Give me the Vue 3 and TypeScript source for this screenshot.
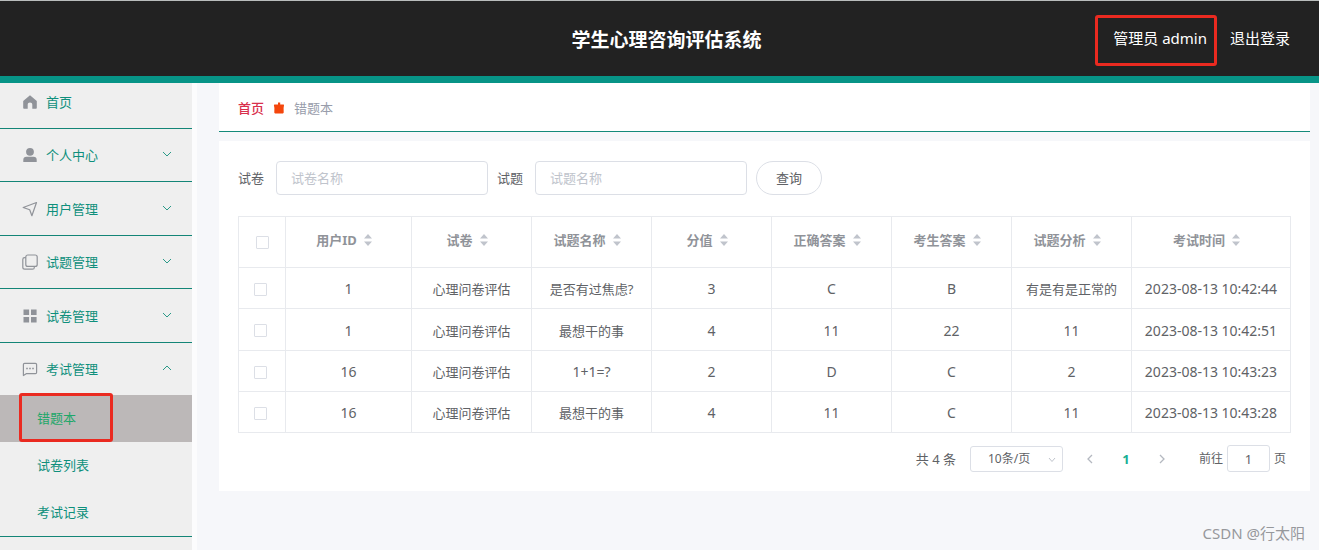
<script setup lang="ts">
import { ref } from 'vue'

interface MenuItem {
  label: string
  icon: string
  children?: string[]
}

interface Column {
  key: string
  label: string
  width: string
}

const menu: MenuItem[] = [
  { label: '首页', icon: 'home' },
  { label: '个人中心', icon: 'user', children: [] },
  { label: '用户管理', icon: 'send', children: [] },
  { label: '试题管理', icon: 'copy', children: [] },
  { label: '试卷管理', icon: 'grid', children: [] },
  { label: '考试管理', icon: 'chat', children: ['错题本', '试卷列表', '考试记录'] },
]
const opened = ref('考试管理')
const current = ref('错题本')

function toggle(item: MenuItem) {
  opened.value = opened.value === item.label ? '' : item.label
}

const columns: Column[] = [
  { key: 'user', label: '用户ID', width: 'w-user' },
  { key: 'paper', label: '试卷', width: 'w-std' },
  { key: 'question', label: '试题名称', width: 'w-std' },
  { key: 'score', label: '分值', width: 'w-std' },
  { key: 'answer', label: '正确答案', width: 'w-std' },
  { key: 'reply', label: '考生答案', width: 'w-std' },
  { key: 'analysis', label: '试题分析', width: 'w-std' },
  { key: 'time', label: '考试时间', width: 'w-rest' },
]

const rows: Record<string, string>[] = [
  { user: '1', paper: '心理问卷评估', question: '是否有过焦虑?', score: '3', answer: 'C', reply: 'B', analysis: '有是有是正常的', time: '2023-08-13 10:42:44' },
  { user: '1', paper: '心理问卷评估', question: '最想干的事', score: '4', answer: '11', reply: '22', analysis: '11', time: '2023-08-13 10:42:51' },
  { user: '16', paper: '心理问卷评估', question: '1+1=?', score: '2', answer: 'D', reply: 'C', analysis: '2', time: '2023-08-13 10:43:23' },
  { user: '16', paper: '心理问卷评估', question: '最想干的事', score: '4', answer: '11', reply: 'C', analysis: '11', time: '2023-08-13 10:43:28' },
]

const isLatin = (s: string) => /^[\x20-\x7e]+$/.test(s)

const paper = ref('')
const question = ref('')
const pageSize = ref('10')
const page = ref('1')
</script>

<template>
  <div class="app">
    <header class="header">
      <h1 class="title">学生心理咨询评估系统</h1>
      <div class="account">
        <span class="user">管理员 admin<i class="mark mark-user"></i></span>
        <a href="#" class="logout">退出登录</a>
      </div>
    </header>

    <div class="body">
      <nav class="sidebar">
        <div v-for="item in menu" :key="item.label" class="group" :class="{ first: !item.children }">
          <button type="button" class="item" @click="toggle(item)">
            <svg class="icon" viewBox="0 0 16 16" width="16" height="16" aria-hidden="true">
              <path v-if="item.icon === 'home'" fill="#909399" d="M8 1.300 14.800 7v7c0 .5-.3.8-.8.8h-3.700v-4c0-1.400-.9-2.200-2.300-2.200s-2.300.8-2.300 2.200v4H2c-.5 0-.8-.3-.8-.8V7z" />
              <g v-else-if="item.icon === 'user'" fill="#909399">
                <circle cx="8" cy="4.800" r="3.900" />
                <path d="M1.300 15v-2.300c0-1.900 1.200-3 3.100-3h7.200c1.900 0 3.100 1.100 3.100 3V15z" />
              </g>
              <path v-else-if="item.icon === 'send'" fill="none" stroke="#909399" stroke-width="1.200" stroke-linejoin="round" d="M14.500 1.500 1.200 6.500l6.500 2.300 2.200 5.900z" />
              <g v-else-if="item.icon === 'copy'" fill="none" stroke="#909399" stroke-width="1.200">
                <rect x="3.800" y="1" width="11.400" height="11.400" rx="2" />
                <path d="M3.800 3.700H2.600C1.500 3.700.8 4.400.8 5.500v7.800c0 1.100.8 1.900 1.900 1.900h7.800c1.100 0 1.800-.7 1.800-1.800v-1" />
              </g>
              <path v-else-if="item.icon === 'grid'" fill="#909399" d="M1.500 1.500h5.600v5.600H1.500zM9 1.500h5.600v5.600H9zM1.500 9h5.600v5.600H1.500zM9 9h5.600v5.600H9z" />
              <g v-else>
                <path fill="none" stroke="#909399" stroke-width="1.200" stroke-linejoin="round" d="M2.600 2.300h10.800c.7 0 1.200.5 1.200 1.200v8c0 .7-.5 1.200-1.200 1.200H4.200L1.400 14.500v-11c0-.7.5-1.200 1.200-1.200z" />
                <path fill="#909399" d="M4.200 6.800h1.600v1.400H4.200zM7.200 6.800h1.600v1.400H7.200zM10.200 6.800h1.600v1.400h-1.600z" />
              </g>
            </svg>
            <span class="label">{{ item.label }}</span>
            <svg v-if="item.children" class="arrow" viewBox="0 0 10 6" width="10" height="6" aria-hidden="true">
              <path fill="none" stroke="#2b9a88" :d="opened === item.label ? 'M1 5l4-4 4 4' : 'M1 1l4 4 4-4'" />
            </svg>
          </button>
          <ul v-if="item.children && item.children.length && opened === item.label" class="sub">
            <li v-for="child in item.children" :key="child">
              <a href="#" class="sub-link" :class="{ active: child === current }" @click.prevent="current = child">
                {{ child }}
                <i v-if="child === current" class="mark mark-sub"></i>
              </a>
            </li>
          </ul>
        </div>
      </nav>

      <main class="main">
        <nav class="crumbs">
          <a href="#" class="crumb-home">首页</a>
          <svg class="crumb-sep" viewBox="0 0 12 12" width="12" height="12" aria-hidden="true">
            <path fill="#f4460c" d="M5 .5h2.200v1.900h3.100c.5 0 .8.4.7.9l-.4 2.700.1 4.600c0 .5-.3.8-.8.8H2.100c-.5 0-.8-.3-.8-.8l.1-4.600L.9 3.300c-.1-.5.2-.9.7-.9H5z" />
          </svg>
          <span class="crumb-now">错题本</span>
        </nav>

        <section class="panel">
          <form class="search" @submit.prevent>
            <label for="paper">试卷</label>
            <input id="paper" v-model="paper" class="field" type="text" placeholder="试卷名称" />
            <label for="question">试题</label>
            <input id="question" v-model="question" class="field" type="text" placeholder="试题名称" />
            <button type="submit" class="query">查询</button>
          </form>

          <table class="table">
            <colgroup>
              <col class="w-check" />
              <col v-for="c in columns" :key="c.key" :class="c.width" />
            </colgroup>
            <thead>
              <tr>
                <th><input type="checkbox" class="check" aria-label="全选" /></th>
                <th v-for="c in columns" :key="c.key" class="sortable">
                  <span class="head">
                    {{ c.label }}
                    <svg viewBox="0 0 8 12" width="8" height="12" aria-hidden="true">
                      <path fill="#c0c4cc" d="M4 0l4 4.500H0zM4 12l4-4.500H0z" />
                    </svg>
                  </span>
                </th>
              </tr>
            </thead>
            <tbody>
              <tr v-for="(r, i) in rows" :key="i">
                <td class="pick"><input type="checkbox" class="check" :aria-label="`选择第${i + 1}行`" /></td>
                <td v-for="c in columns" :key="c.key" :class="{ latin: isLatin(r[c.key]) }">{{ r[c.key] }}</td>
              </tr>
            </tbody>
          </table>

          <div class="pager">
            <span class="total">共 4 条</span>
            <span class="size">
              <select v-model="pageSize" aria-label="每页条数">
                <option value="10">10条/页</option>
                <option value="20">20条/页</option>
              </select>
              <svg viewBox="0 0 8 6" width="8" height="6" aria-hidden="true">
                <path fill="none" stroke="#c0c4cc" d="M1 1l3 3.500L7 1" />
              </svg>
            </span>
            <button type="button" class="step" aria-label="上一页">
              <svg viewBox="0 0 6 10" width="6" height="10"><path fill="none" stroke="#b4b8c0" stroke-width="1.300" d="M5 1L1 5l4 4" /></svg>
            </button>
            <button type="button" class="step on">1</button>
            <button type="button" class="step" aria-label="下一页">
              <svg viewBox="0 0 6 10" width="6" height="10"><path fill="none" stroke="#b4b8c0" stroke-width="1.300" d="M1 1l4 4-4 4" /></svg>
            </button>
            <label class="jump">前往<input v-model="page" type="text" />页</label>
          </div>
        </section>
      </main>
    </div>
    <span class="watermark">CSDN @行太阳</span>
  </div>
</template>

<style>
body {
  margin: 0;
  overflow: hidden;
}
</style>

<style scoped>
.app {
  position: relative;
  display: flex;
  flex-direction: column;
  height: 100vh;
  overflow: hidden;
  background: #f6f7fa;
  font-family: "Noto Sans", "Noto Sans CJK SC", sans-serif;
  font-size: 13px;
  line-height: 20px;
  color: #606266;
}
.app * {
  box-sizing: border-box;
}
button,
input,
select {
  font: inherit;
  color: inherit;
}
a {
  text-decoration: none;
}

.header {
  flex: none;
  display: grid;
  grid-template-columns: 1fr auto 1fr;
  align-items: center;
  height: 83px;
  padding: 0 29px 0 43px;
  border-top: 1px solid #b9bdbc;
  border-bottom: 7px solid #079487;
  background: #222;
  color: #fff;
}
.title {
  grid-column: 2;
  margin: 0;
  padding-top: 2px;
  font-size: 19px;
  line-height: 28px;
  font-weight: 700;
}
.account {
  display: flex;
  justify-content: flex-end;
  gap: 23px;
  padding-bottom: 2px;
  font-size: 15px;
  line-height: 22px;
}
.user {
  position: relative;
}
.logout {
  color: #fff;
}
.mark {
  position: absolute;
  border: 3px solid #ea2a20;
  border-radius: 3px;
  pointer-events: none;
}
.mark-user {
  inset: -12px -10px -17px -18px;
}
.mark-sub {
  top: -2px;
  left: 19px;
  width: 94px;
  height: 49px;
}

.body {
  flex: 1;
  display: flex;
  min-height: 0;
}
.sidebar {
  flex: none;
  width: 197px;
  border-right: 5px solid #fcfcfd;
  background: #efefef;
}
.group {
  border-bottom: 1px solid #138577;
}
.item {
  display: flex;
  align-items: center;
  width: 100%;
  height: 53px;
  padding: 0 20px 0 22px;
  border: 0;
  background: none;
  color: #0e8f7c;
  text-align: left;
  cursor: pointer;
}
.group:nth-child(even) .item {
  height: 52px;
}
.first .item {
  height: 45px;
  padding-bottom: 8px;
}
.icon {
  margin-right: 8px;
}
.label {
  flex: 1;
}
.arrow {
  margin-bottom: 2px;
}
.sub {
  margin: 0;
  padding: 0;
  list-style: none;
}
.sub-link {
  position: relative;
  display: block;
  padding-left: 37px;
  line-height: 47px;
  color: #0e8f7c;
}
.sub-link.active {
  background: #bcb8b8;
  color: #1ea76a;
}

.main {
  flex: 1;
  min-width: 0;
  padding: 0 9px 0 22px;
}
.crumbs {
  display: flex;
  align-items: center;
  height: 49px;
  padding: 2px 0 0 19px;
  border-bottom: 1px solid #148a7a;
  background: #fff;
}
.crumb-home {
  font-weight: 500;
  color: #d92f4c;
}
.crumb-sep {
  margin: 0 9px;
}
.crumb-now {
  color: #989dab;
}
.panel {
  margin-top: 9px;
  padding: 20px 19px 19px;
  background: #fff;
}
.search {
  display: flex;
  align-items: center;
  margin-bottom: 21px;
}
.search label {
  margin-right: 12px;
}
.field {
  width: 212px;
  height: 34px;
  margin-right: 9px;
  padding: 0 14px;
  border: 1px solid #dcdfe6;
  border-radius: 4px;
  background: #fff;
}
.field::placeholder {
  color: #c0c4cc;
}
.query {
  width: 66px;
  height: 34px;
  padding: 0;
  border: 1px solid #dcdfe6;
  border-radius: 17px;
  background: #fff;
}

.table {
  width: 100%;
  table-layout: fixed;
  border-collapse: collapse;
}
.w-check {
  width: 47px;
}
.w-user {
  width: 126px;
}
.w-std {
  width: 120px;
}
.table th,
.table td {
  padding: 0;
  border: 1px solid #e8eaee;
  text-align: center;
}
.table th {
  height: 51px;
  font-weight: 700;
  color: #909399;
}
.table th.sortable {
  padding: 0 9px 4px 0;
}
.table td {
  height: 41px;
  padding-top: 2px;
}
.table tr:nth-child(2) td {
  height: 42px;
}
.table td.pick {
  padding-right: 3px;
}
.table td.latin {
  font-size: 14px;
}
.head {
  display: inline-flex;
  align-items: center;
  gap: 7px;
}
.check {
  appearance: none;
  display: block;
  width: 13px;
  height: 13px;
  margin: 0 auto;
  border: 1px solid #dcdfe6;
  border-radius: 1px;
  background: #fff;
}

.pager {
  display: flex;
  justify-content: flex-end;
  align-items: center;
  margin-top: 12px;
  padding-right: 5px;
}
.size {
  position: relative;
  margin: 0 9px 0 14px;
}
.size select {
  appearance: none;
  display: block;
  width: 93px;
  height: 26px;
  padding: 0 17px;
  border: 1px solid #dcdfe6;
  border-radius: 3px;
  background: #fff;
  font-size: 12px;
}
.size svg {
  position: absolute;
  right: 7px;
  top: 11px;
}
.step {
  width: 36px;
  height: 26px;
  padding: 0;
  border: 0;
  background: none;
}
.step.on {
  font-weight: 700;
  color: #1aaf94;
}
.jump {
  display: flex;
  align-items: center;
  gap: 4px;
  margin-left: 19px;
  font-size: 12px;
}
.jump input {
  width: 43px;
  height: 27px;
  padding: 0;
  border: 1px solid #dcdfe6;
  border-radius: 3px;
  background: #fff;
  font-size: 13px;
  text-align: center;
}
.watermark {
  position: absolute;
  right: 14px;
  bottom: 6px;
  font-size: 15px;
  line-height: 22px;
  color: #96989c;
}
</style>
